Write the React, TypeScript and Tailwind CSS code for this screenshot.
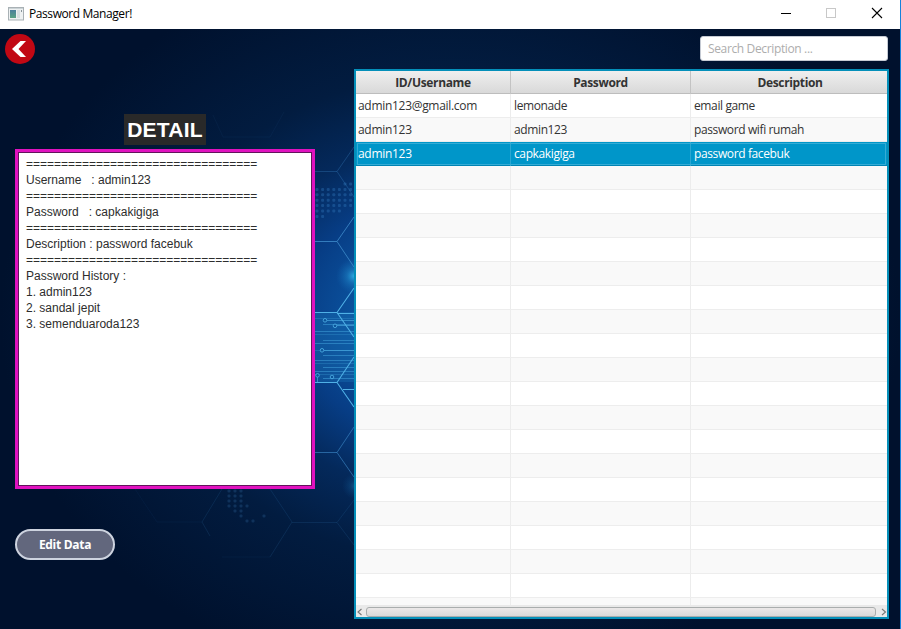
import React from "react";

const RULE = "=================================";
const DETAIL = [
  RULE,
  "Username   : admin123",
  RULE,
  "Password   : capkakigiga",
  RULE,
  "Description : password facebuk",
  RULE,
  "Password History :",
  "1. admin123",
  "2. sandal jepit",
  "3. semenduaroda123",
].join("\n");

const ROWS: string[][] = [
  ["admin123@gmail.com", "lemonade", "email game"],
  ["admin123", "admin123", "password wifi rumah"],
  ["admin123", "capkakigiga", "password facebuk"],
  ...Array.from({ length: 19 }, () => ["", "", ""]),
];

function Backdrop() {
  const dots: [number, number][] = [];
  for (let r = 0; r < 7; r++)
    for (let c = 0; c < 7; c++)
      if (!(r === 0 && c < 5) && !(r === 5 && c > 4) && !(r === 6 && c > 1)) dots.push([315.5 + c * 5.6, 182.5 + r * 5.4]);
  const low: [number, number][] = [
    [229, 491], [235, 491], [241, 491], [229, 496], [235, 496], [241, 496], [229, 501], [235, 501], [241, 501],
    [229, 506], [235, 506], [241, 506], [247, 506], [235, 511], [241, 511], [241, 516], [247, 521], [253, 521], [264, 516],
  ];
  const lines = [318, 324, 331, 334, 340, 343, 350, 355, 360, 363, 367, 371, 374, 378];
  return (
    <svg className="absolute inset-0" width="900" height="600" viewBox="0 29 900 600" fill="none">
      <defs>
        <radialGradient id="bg" gradientUnits="userSpaceOnUse" cx="450" cy="318" r="450" gradientTransform="translate(450 318) scale(1 .82) translate(-450 -318)">
          <stop offset="0" stopColor="#106cb8" />
          <stop offset=".2" stopColor="#0b539f" />
          <stop offset=".34" stopColor="#073d85" />
          <stop offset=".48" stopColor="#04295b" />
          <stop offset=".66" stopColor="#021c40" />
          <stop offset="1" stopColor="#00112d" />
        </radialGradient>
        <radialGradient id="glow">
          <stop offset="0" stopColor="#2ca9df" />
          <stop offset=".4" stopColor="#1f88ca" stopOpacity=".5" />
          <stop offset="1" stopColor="#1268b5" stopOpacity="0" />
        </radialGradient>
      </defs>
      <rect y="29" width="900" height="600" fill="url(#bg)" />
      <rect x="315" y="312" width="40" height="70" fill="#1f7fc0" opacity=".3" />
      <circle cx="354" cy="276" r="18" fill="url(#glow)" />
      <circle cx="355" cy="486" r="13" fill="url(#glow)" opacity=".35" />
      {dots.map(([x, y]) => <rect key={`${x}-${y}`} x={x} y={y} width="3" height="3" rx="1" fill="#3378bd" opacity=".38" />)}
      {low.map(([x, y]) => <rect key={`${x}-${y}`} x={x - 1.5} y={y - 1.5} width="3" height="3" rx="1" fill="#2b5f92" opacity=".35" />)}
      <g stroke="#3f8ccc">
        <path d="M315 171.5H337L354 147M337 171.5L354 197" opacity=".3" />
        <path d="M315 241.5H337L354 217M337 241.5L354 267" opacity=".8" />
        <path d="M315 452.5H337L354 427M337 452.5L354 477" opacity=".6" />
        <path d="M292 522.5H337L354 500M337 522.5L354 545M270 489L292 522L270 557M222 489L202 522L210 536" opacity=".14" />
        <path d="M270 557H222M213 115L223 137H270L284 112M135 489L157 522H202" opacity=".06" />
      </g>
      <g stroke="#3f9fd8">
        {lines.map((y, i) => <path key={y} d={`M${i % 3 === 1 ? 323 : 315} ${y + 0.5}H354`} opacity={i % 3 === 0 ? 0.3 : 0.55} />)}
      </g>
      <g stroke="#4fb0e6">
        <path d="M315 312.5H337L354 288M337 312.5L354 337M337 313.5H354M315 382.5H337L354 357M337 382.5L354 407M343 389.5H354" strokeWidth="1.1" />
        <path d="M327 320.5H354M337 325.5H354M324 350.5H354M317.5 377V382" opacity=".6" />
        <g fill="#0c5399" opacity=".85">
          <circle cx="325" cy="320.3" r="1.8" /><circle cx="335" cy="325.8" r="1.8" /><circle cx="322" cy="350.3" r="1.8" />
          <circle cx="317.5" cy="375.3" r="1.8" /><circle cx="332" cy="377" r="1.8" />
        </g>
      </g>
    </svg>
  );
}

function TitleBar() {
  return (
    <header className="flex h-[29px] items-center bg-white pb-[2px] pl-2">
      <svg width="16" height="14" viewBox="0 0 16 14">
        <rect x=".5" y=".5" width="15" height="12.5" fill="#eef1f2" stroke="#a9b1b5" />
        <path d="M1 1.5H15" stroke="#cbd3d6" />
        <defs><linearGradient id="pane" x2="0" y2="1"><stop stopColor="#4c7f9c" /><stop offset="1" stopColor="#5aa384" /></linearGradient></defs>
        <rect x="2" y="3" width="6" height="8" fill="url(#pane)" />
        <rect x="9" y="3" width="3" height="8" fill="#d9dfe1" />
        <rect x="13" y="3" width="1" height="2" fill="#889499" />
      </svg>
      <h1 className="ml-[5px] grow font-['Open_Sans','Noto_Sans',sans-serif] text-[12px] tracking-[-0.42px] text-black">Password Manager!</h1>
      <svg width="120" height="27" viewBox="0 0 120 27" fill="none" shapeRendering="crispEdges">
        <path d="M1 13.5H11" stroke="#000" />
        <rect x="46.5" y="8.5" width="9" height="9" stroke="#c8c8c8" />
        <path d="M92 8L102 18M102 8L92 18" stroke="#000" strokeWidth="1.1" shapeRendering="auto" />
      </svg>
    </header>
  );
}

function PasswordTable() {
  return (
    <section className="flex h-[550px] w-[535px] flex-col border-2 border-[#048fb9] bg-white font-['Open_Sans','Noto_Sans',sans-serif] text-[12px] text-[#333]">
      <div className="grid h-[23px] shrink-0 grid-cols-[155px_180px_1fr] border-b border-[#bdbdbd] bg-linear-to-b from-[#efefef] to-[#d9d9d9] text-center font-bold leading-[24px] tracking-[-0.35px]">
        <div className="border-r border-[#c3c3c3]">ID/Username</div>
        <div className="border-r border-[#c3c3c3]">Password</div>
        <div className="pl-[2px]">Description</div>
      </div>
      <div className="min-h-0 grow overflow-hidden">
        {ROWS.map((row, i) => (
          <div
            key={i}
            className={`grid h-6 grid-cols-[155px_180px_1fr] border-b leading-[24px] ${
              i === 2 ? "border-[#0084b4] bg-[#0096c9] text-white outline-1 -outline-offset-2 outline-[#35acd5]" : i % 2 ? "border-[#ededed] bg-[#f9f9f9]" : "border-[#ededed] bg-white"
            }`}
          >
            {row.map((cell, j) => (
              <div key={j} className={`whitespace-nowrap ${j === 0 ? "pl-[2px] tracking-[-0.3px]" : "pl-[3px] tracking-[-0.38px]"} ${j < 2 ? (i === 2 ? "border-r border-[#2ba7d2]" : "border-r border-[#ececec]") : ""}`}>
                {cell}
              </div>
            ))}
          </div>
        ))}
      </div>
      <div className="flex h-3 shrink-0 items-center justify-between bg-[#e9e9e9] pl-px pt-px">
        <svg width="6" height="8" viewBox="0 0 6 8" fill="none" stroke="#777" strokeWidth="1.1"><path d="M4.5 1L1 4L4.5 7" /></svg>
        <div className="ml-[3px] mr-[5px] h-[10px] grow rounded-[3px] border border-[#a9adad] bg-linear-to-b from-[#ebe8e8] to-[#d9d9d9]" />
        <svg width="6" height="8" viewBox="0 0 6 8" fill="none" stroke="#777" strokeWidth="1.1"><path d="M1 1L4.5 4L1 7" /></svg>
      </div>
    </section>
  );
}

export default function App() {
  return (
    <div className="h-[629px] w-[901px] overflow-hidden border-r border-[#1583dc]">
      <TitleBar />
      <main className="relative h-[600px] bg-[#00122e]">
        <Backdrop />
        <div className="relative flex h-full">
          <div className="flex w-[354px] flex-col items-start pt-[5px]">
            <button className="ml-[5px] flex size-[30px] items-center justify-center rounded-full bg-[#c10814]" aria-label="Back">
              <svg width="30" height="30" viewBox="0 0 30 30" fill="#fff"><path d="M15.5 7H21L13.5 15L21 23H15.5L7 15Z" /></svg>
            </button>
            <h2 className="ml-[124px] mt-[50px] h-[31px] w-[82px] bg-[#292929] text-center font-['Liberation_Sans',Arial,sans-serif] text-[21px] font-bold leading-[31px] tracking-[0.2px] text-white">DETAIL</h2>
            <div className="ml-[15px] mt-1 h-[340px] w-[300px] border-[3px] border-[#e012bf]">
              <pre className="h-full whitespace-pre border border-[#63145c] bg-white pl-[7px] pt-[3px] font-['Liberation_Sans',Arial,sans-serif] text-[12px] leading-[16px] text-[#2d2d2d]">{DETAIL}</pre>
            </div>
            <button className="ml-[15px] mt-10 h-[31px] w-[100px] rounded-full border-2 border-[#cdd3df] bg-[#62677d] font-['Open_Sans','Noto_Sans',sans-serif] text-[12px] font-bold leading-[27px] tracking-[-0.3px] text-white">Edit Data</button>
          </div>
          <div className="flex flex-col items-end pt-[7px]">
            <input
              className="mb-2 mr-px h-[25px] w-[188px] rounded-[3px] border border-[#c5cad3] bg-white px-[7px] font-['Open_Sans','Noto_Sans',sans-serif] text-[12px] tracking-[-0.36px] outline-none placeholder:text-[#adadad]"
              placeholder="Search Decription ..."
            />
            <PasswordTable />
          </div>
        </div>
      </main>
    </div>
  );
}
